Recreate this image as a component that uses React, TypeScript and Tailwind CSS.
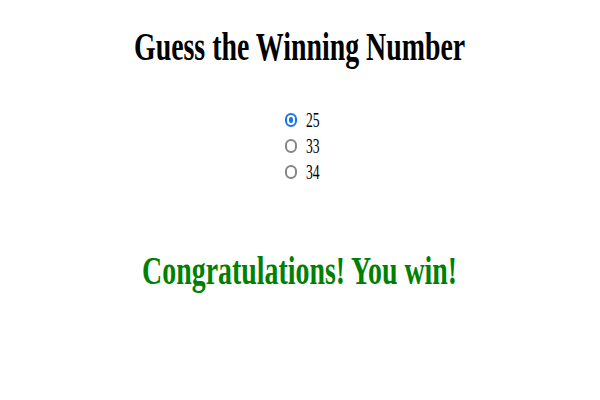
import React, { useState } from 'react';

const options = [25, 33, 34];

const App: React.FC = () => {
  const [picked, setPicked] = useState(25);

  return (
    <div className="w-[600px] h-[400px] bg-white flex flex-col items-center font-['Liberation_Serif',serif] text-black">
      <h1 className="mt-[22px] text-[41px] leading-[48px] font-bold scale-x-[0.68] whitespace-nowrap">
        Guess the Winning Number
      </h1>

      <div className="mt-[37px] ml-[12px] flex flex-col items-start">
        {options.map((n) => (
          <label key={n} className="flex items-center h-[26px]">
            <input
              type="radio"
              name="guess"
              checked={picked === n}
              onChange={() => setPicked(n)}
              className="appearance-none shrink-0 w-[12px] h-[14px] m-0 rounded-full border-2 border-[#858585] bg-white checked:border-[#1a73e8] checked:bg-[#1a73e8] checked:p-[2px] bg-clip-content"
            />
            <span className="ml-[9px] text-[22px] leading-[26px] scale-x-[0.62] origin-left">{n}</span>
          </label>
        ))}
      </div>

      <p className="mt-[61px] text-[41px] leading-[48px] font-bold text-[#008000] scale-x-[0.68] whitespace-nowrap">
        Congratulations! You win!
      </p>
    </div>
  );
};

export default App;
